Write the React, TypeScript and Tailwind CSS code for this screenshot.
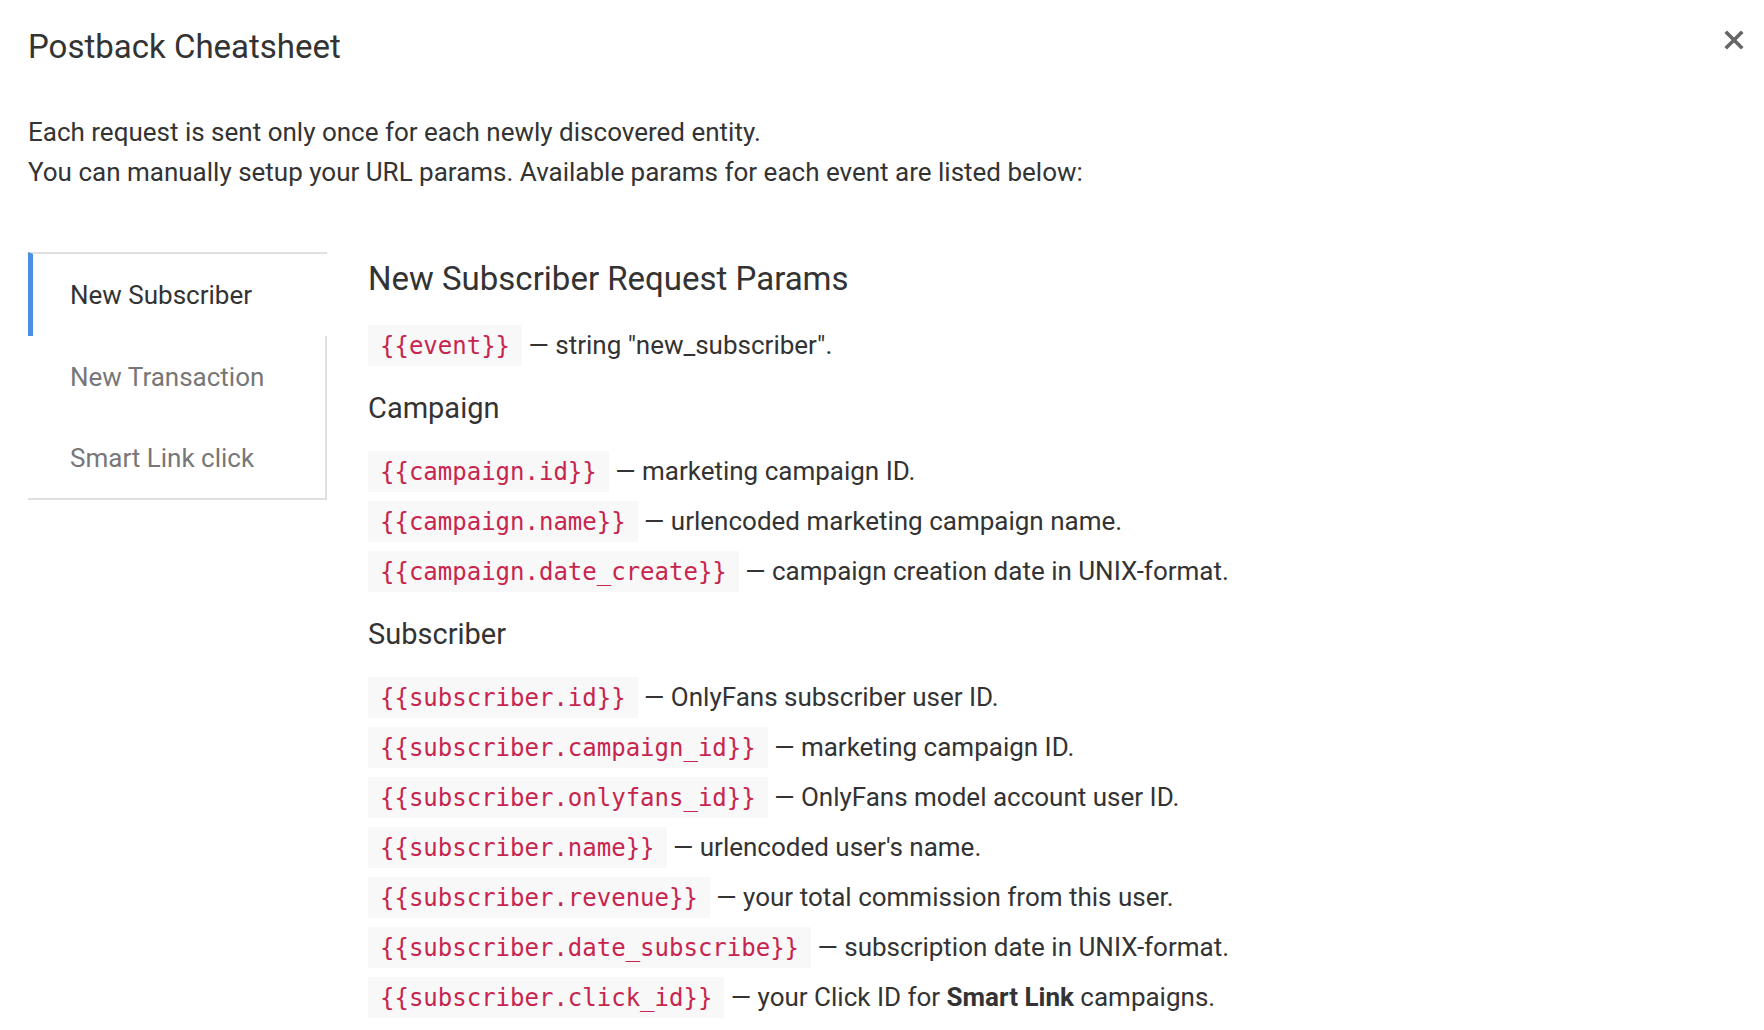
import type { ReactNode } from "react";

const tabs = ["New Subscriber", "New Transaction", "Smart Link click"];

const campaignParams: { code: string; text: ReactNode }[] = [
  { code: "{{campaign.id}}", text: "marketing campaign ID." },
  { code: "{{campaign.name}}", text: "urlencoded marketing campaign name." },
  { code: "{{campaign.date_create}}", text: "campaign creation date in UNIX-format." },
];

const subscriberParams: { code: string; text: ReactNode }[] = [
  { code: "{{subscriber.id}}", text: "OnlyFans subscriber user ID." },
  { code: "{{subscriber.campaign_id}}", text: "marketing campaign ID." },
  { code: "{{subscriber.onlyfans_id}}", text: "OnlyFans model account user ID." },
  { code: "{{subscriber.name}}", text: "urlencoded user's name." },
  { code: "{{subscriber.revenue}}", text: "your total commission from this user." },
  { code: "{{subscriber.date_subscribe}}", text: "subscription date in UNIX-format." },
  {
    code: "{{subscriber.click_id}}",
    text: (
      <>
        your Click ID for <b className="font-bold">Smart Link</b> campaigns.
      </>
    ),
  },
];

function ParamRow({ code, text }: { code: string; text: ReactNode }) {
  return (
    <div className="flex items-center h-[41px] text-[26px] text-[#333]">
      <code className="flex items-center h-[41px] px-[12px] bg-[#f8f8f8] text-[#c7254e] text-[24px] font-['DejaVu_Sans_Mono',monospace]">
        {code}
      </code>
      <span className="whitespace-pre">{" — "}</span>
      <span>{text}</span>
    </div>
  );
}

function CloseIcon() {
  return (
    <svg width="20" height="20" viewBox="0 0 20 20" className="text-[#666]">
      <path
        d="M3 3 L17 17 M17 3 L3 17"
        stroke="currentColor"
        strokeWidth="3.6"
        strokeLinecap="square"
      />
    </svg>
  );
}

export default function App() {
  return (
    <div className="min-h-screen bg-white font-['Roboto',sans-serif] text-[#333]">
      <div className="flex items-start justify-between pl-[28px] pr-[20px] pt-[27px]">
        <h1 className="text-[33px] leading-[40px] font-normal">Postback Cheatsheet</h1>
        <button className="mt-[3px]">
          <CloseIcon />
        </button>
      </div>

      <div className="px-[28px] mt-[45px] text-[26px] leading-[40px]">
        <p>Each request is sent only once for each newly discovered entity.</p>
        <p>You can manually setup your URL params. Available params for each event are listed below:</p>
      </div>

      <div className="flex gap-[41px] px-[28px] mt-[60px]">
        <div className="w-[299px] shrink-0 self-start border-b-2 border-[#e0e0e0]">
          {tabs.map((t, i) =>
            i === 0 ? (
              <div
                key={t}
                className="flex items-center h-[84px] pl-[37px] border-t-2 border-t-[#e0e0e0] border-l-[5px] border-l-[#4a90e2] text-[26px] text-[#333]"
              >
                {t}
              </div>
            ) : (
              <div
                key={t}
                className="flex items-center h-[81px] pl-[42px] pt-[1px] border-r-2 border-[#e0e0e0] text-[26px] text-[#777]"
              >
                {t}
              </div>
            ),
          )}
        </div>

        <div className="flex-1 min-w-0">
          <h2 className="pt-[1px] text-[33px] leading-[52px] font-normal">New Subscriber Request Params</h2>
          <div className="mt-[20px]">
            <ParamRow code="{{event}}" text={'string "new_subscriber".'} />
          </div>

          <h3 className="mt-[24px] mb-[25px] text-[29px] leading-[36px] font-normal">Campaign</h3>
          <div className="flex flex-col gap-[9px]">
            {campaignParams.map((p) => (
              <ParamRow key={p.code} code={p.code} text={p.text} />
            ))}
          </div>

          <h3 className="mt-[24px] mb-[25px] text-[29px] leading-[36px] font-normal">Subscriber</h3>
          <div className="flex flex-col gap-[9px] pb-[12px]">
            {subscriberParams.map((p) => (
              <ParamRow key={p.code} code={p.code} text={p.text} />
            ))}
          </div>
        </div>
      </div>
    </div>
  );
}
